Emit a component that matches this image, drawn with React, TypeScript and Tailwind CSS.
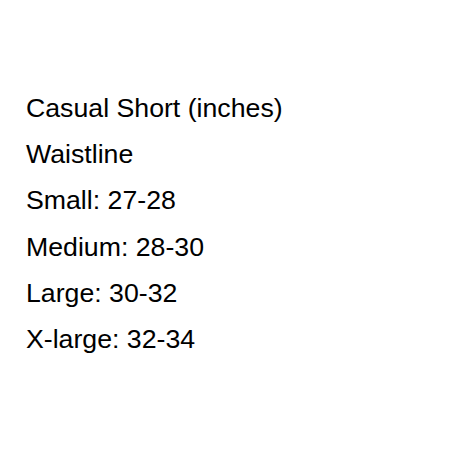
import React from "react";

const lines = [
    "Casual Short (inches)",
    "Waistline",
    "Small: 27-28",
    "Medium: 28-30",
    "Large: 30-32",
    "X-large: 32-34",
];

const App = () => {
    return (
        <div className="w-[464px] h-[464px] bg-white pt-[85px] pl-[26px] font-['Liberation_Sans',Arial,sans-serif] text-black">
            {lines.map((line) => (
                <p key={line} className="text-[26.7px] leading-[46.2px]">
                    {line}
                </p>
            ))}
        </div>
    );
};

export default App;
